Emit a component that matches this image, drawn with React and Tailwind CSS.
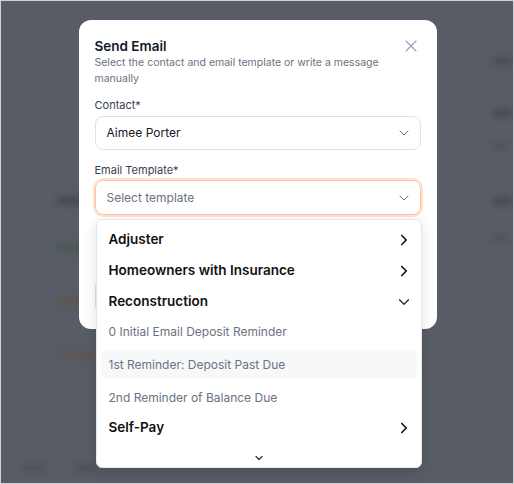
import { ChevronDown, ChevronRight, X } from "lucide-react";

const groups = [
  { name: "Adjuster", open: false },
  { name: "Homeowners with Insurance", open: false },
  { name: "Reconstruction", open: true },
];

const templates = [
  "0 Initial Email Deposit Reminder",
  "1st Reminder: Deposit Past Due",
  "2nd Reminder of Balance Due",
];

const GroupRow = ({ name, open }) => (
  <div className="flex h-[31px] items-center justify-between pl-3 pr-[8px]">
    <span className="text-[13.5px] font-semibold text-[#111111]">{name}</span>
    {open ? (
      <ChevronDown className="h-[18px] w-[18px] text-[#222]" strokeWidth={1.6} />
    ) : (
      <ChevronRight className="h-[18px] w-[18px] text-[#111]" strokeWidth={2.2} />
    )}
  </div>
);

const BlurredPage = () => (
  <div className="flex h-full w-full justify-between blur-[3px]">
    <div className="flex w-[100px] flex-col pt-[196px] pl-[56px]">
      <div className="h-[8px] w-[40px] rounded bg-[#45484f]" />
      <div className="mt-[38px] h-[8px] w-[34px] rounded bg-[#4b5a55]" />
      <div className="mt-[46px] h-[8px] w-[40px] rounded bg-[#5b564f]" />
      <div className="mt-[46px] h-[8px] w-[36px] rounded bg-[#5c5752]" />
      <div className="mt-auto mb-[12px] flex gap-[30px]">
        <div className="-ml-[36px] h-[6px] w-[24px] rounded bg-[#4c4f56]" />
        <div className="h-[6px] w-[24px] rounded bg-[#4c4f56]" />
      </div>
    </div>
    <div className="flex w-[20px] flex-col pt-[56px]">
      <div className="h-[8px] w-[20px] rounded bg-[#4a4d54]" />
      <div className="mt-[44px] h-[8px] w-[20px] rounded bg-[#464950]" />
      <div className="mt-[26px] h-[6px] w-[14px] rounded bg-[#4d5057]" />
      <div className="mt-[48px] h-[8px] w-[20px] rounded bg-[#464950]" />
      <div className="mt-[30px] h-[6px] w-[14px] rounded bg-[#4d5057]" />
    </div>
  </div>
);

export default function App() {
  return (
    <div
      className="relative h-[484px] w-[514px] overflow-hidden border border-[#cfd2d6] bg-[#585c64]"
      style={{ fontFamily: "Inter, 'Noto Sans', sans-serif" }}
    >
      <BlurredPage />
      <div className="absolute inset-0 flex justify-center pt-[19px] pl-[1px]">
        <div className="h-[309px] w-[358px] rounded-xl bg-white px-[16px] pt-[17px]">
          <div className="flex h-[18px] items-start justify-between">
            <h2 className="text-[13.5px] leading-[18px] font-semibold text-[#111827]">Send Email</h2>
            <button className="-mt-[1px] text-[#94a3b8]">
              <X className="h-[20px] w-[20px]" strokeWidth={1.4} />
            </button>
          </div>
          <p className="text-[10.5px] leading-[16px] text-[#6b7280]">
            Select the contact and email template or write a message manually
          </p>
          <label className="mt-[10px] block text-[11px] leading-[16px] text-[#374151]">Contact*</label>
          <div className="mt-[3px] flex h-[34px] items-center justify-between rounded-lg border border-[#dfe2e7] pl-[11px] pr-[8px]">
            <span className="text-[12px] text-[#111827]">Aimee Porter</span>
            <ChevronDown className="h-[16px] w-[16px] text-[#6b7280]" strokeWidth={1.5} />
          </div>
          <label className="mt-[12px] block text-[11px] leading-[16px] text-[#374151]">Email Template*</label>
          <div className="relative mt-[2px]">
            <div className="flex h-[35px] items-center justify-between rounded-lg border border-[#fcc3a0] pl-[11px] pr-[8px] ring-2 ring-[#ffe3d0]">
              <span className="text-[12px] text-[#6b7280]">Select template</span>
              <ChevronDown className="h-[16px] w-[16px] text-[#6b7280]" strokeWidth={1.5} />
            </div>
            <div className="absolute top-full left-[1px] z-10 mt-[4px] w-[326px] rounded-md border border-[#e5e7eb] bg-white pt-[4px] shadow-[0_4px_14px_rgba(0,0,0,0.12)]">
              {groups.map((g) => (
                <GroupRow key={g.name} name={g.name} open={g.open} />
              ))}
              <div className="flex flex-col gap-[4px] px-[4px]">
                {templates.map((t, i) => (
                  <div
                    key={t}
                    className={`flex h-[29px] items-center rounded-md px-[8px] text-[12px] text-[#6b7280] ${i === 1 ? "bg-[#f7f8fa]" : ""}`}
                  >
                    {t}
                  </div>
                ))}
              </div>
              <GroupRow name="Self-Pay" open={false} />
              <div className="flex h-[24px] items-start justify-center pt-[9px]">
                <ChevronDown className="h-[12px] w-[12px] text-[#333]" strokeWidth={2.5} />
              </div>
            </div>
          </div>
          <div className="mt-[66px] h-[30px] w-full rounded-md border border-[#d9dce1]" />
        </div>
      </div>
    </div>
  );
}
